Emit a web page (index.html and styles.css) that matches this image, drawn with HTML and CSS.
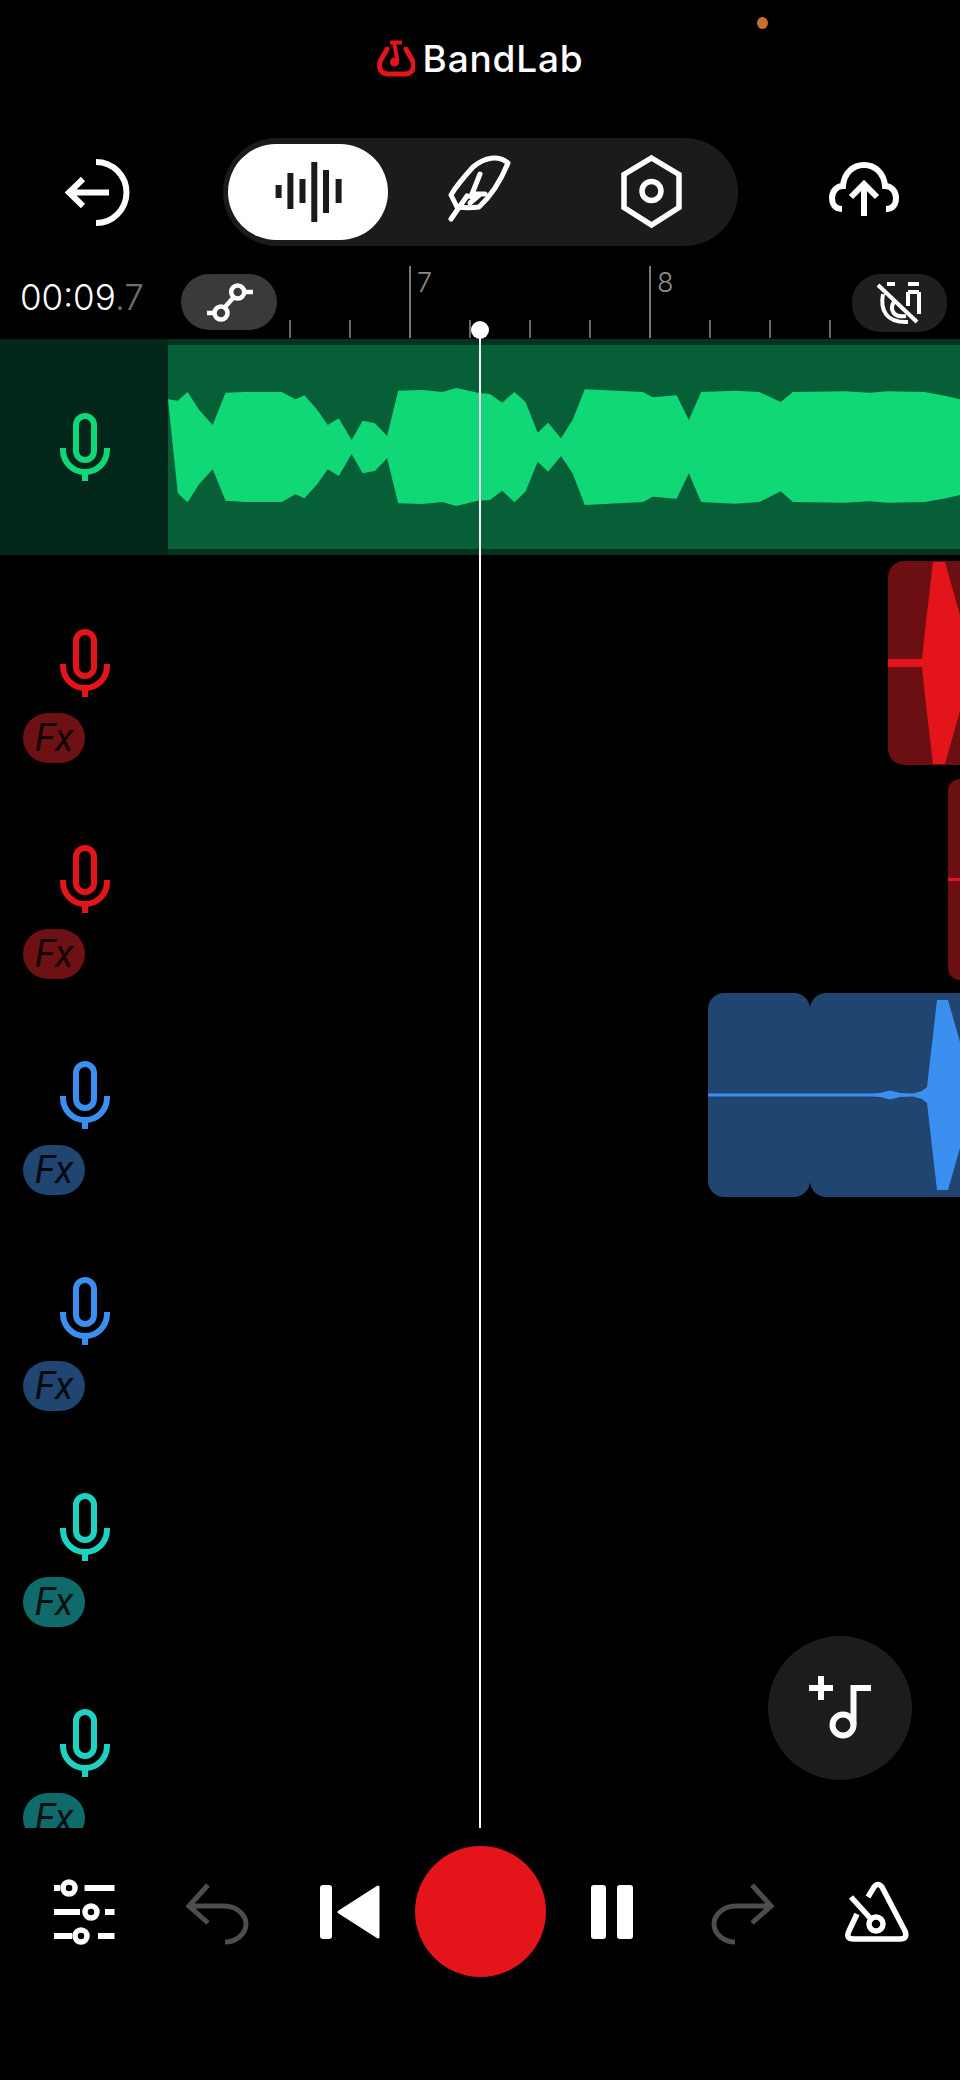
FILE: index.html
```html
<!DOCTYPE html>
<html lang="en">
<head>
    <meta charset="UTF-8">
    <meta name="viewport" content="width=device-width, initial-scale=1.0">
    <title>BandLab Studio</title>
    <link rel="stylesheet" href="styles.css">
</head>
<body>
    <svg class="sprite">
        <symbol id="mic" viewBox="0 0 50 68">
            <rect x="16" y="3" width="18" height="44" rx="9" fill="none" stroke="currentColor" stroke-width="6"/>
            <path d="M3 35V37A22 22 0 0 0 47 37V35M25 59V68" fill="none" stroke="currentColor" stroke-width="6"/>
        </symbol>
        <symbol id="undo" viewBox="0 0 72 72">
            <path d="M28 9L9 30L28 47M9 30H44C58 30 66 40 66 48C66 58 56 66 45 66" fill="none" stroke="currentColor" stroke-width="5"/>
        </symbol>
    </svg>

    <span class="status-dot"></span>

    <header class="brand">
        <svg class="brand-logo" viewBox="7 10 38 37">
            <path d="M17 19C14 26 9.5 29 9.5 35C9.5 41 13 44 18 44H35C40 44 43.5 41 43.5 35C43.5 29 39 26 36 19" fill="none" stroke="#e3151a" stroke-width="5" stroke-linecap="round"/>
            <path d="M20 12.5H32M24 12L27.5 31" fill="none" stroke="#e3151a" stroke-width="4"/>
            <circle cx="24.5" cy="32" r="4.5" fill="#e3151a"/>
        </svg>
        <span class="brand-name">BandLab</span>
    </header>

    <nav class="toolbar">
        <svg class="icon-back" width="70" height="70" viewBox="0 0 70 70">
            <path d="M34 5A30.5 30.5 0 0 1 34 66" fill="none" stroke="#fff" stroke-width="6"/>
            <path d="M47 35.5H8M21 22L7 35.5L21 49" fill="none" stroke="#fff" stroke-width="6"/>
        </svg>
        <div class="pill">
            <div class="seg seg-active">
                <svg width="72" height="64" viewBox="0 0 72 64" fill="#1a1b1d">
                    <rect x="3.6" y="25" width="6" height="13"/>
                    <rect x="15.4" y="13" width="6" height="36"/>
                    <rect x="27.5" y="19" width="6" height="24"/>
                    <rect x="39.3" y="2" width="6" height="60"/>
                    <rect x="51" y="10" width="6" height="43"/>
                    <rect x="63.6" y="19" width="6" height="24"/>
                </svg>
            </div>
            <div class="seg seg-mid">
                <svg width="72" height="76" viewBox="1 4 72 76" fill="none" stroke="#fff" stroke-width="5">
                    <path d="M65 13C55 5 42 7 30 17C20 28 12 38 8 45L14 57C22 58 30 58 36 57C48 46 58 30 65 13Z" stroke-linejoin="round"/>
                    <path d="M8 69L24 46M37 24L29 44H42M24 46L34 47L27 53" stroke-linecap="round"/>
                </svg>
            </div>
            <div class="seg">
                <svg width="66" height="76" viewBox="0 0 66 76" fill="none" stroke="#fff" stroke-width="5.5">
                    <path d="M32.5 4L60 20.5V53.5L32.5 71L5 53.5V20.5Z"/>
                    <circle cx="32.5" cy="37" r="9.5"/>
                </svg>
            </div>
        </div>
        <svg class="icon-cloud" width="76" height="60" viewBox="0 2 76 60" fill="none" stroke="#fff" stroke-width="6">
            <path d="M16 49C8 49 6 43 6 38C6 31 11 26 17 26C18 13 27 5 38 5C49 5 58 13 59 26C65 26 70 31 70 38C70 44 67 49 60 49"/>
            <path d="M38 56V24M25 37L38 24L51 37"/>
        </svg>
    </nav>

    <section class="timebar">
        <div class="timer">00:09<span class="timer-dim">.7</span></div>
        <div class="chip chip-auto">
            <svg width="96" height="56" viewBox="0 0 96 56" fill="none" stroke="#fff" stroke-width="4.5">
                <circle cx="56.7" cy="18" r="6.5"/>
                <circle cx="40" cy="39" r="6.5"/>
                <path d="M52 24L44 33M63 18H72M33 39H26"/>
            </svg>
        </div>
        <div class="ruler">
            <div class="bar"><span>7</span></div>
            <div class="bar"><span>8</span></div>
        </div>
        <div class="chip chip-snap">
            <svg width="95" height="58" viewBox="0 0 95 58" fill="none" stroke="#fff" stroke-width="4">
                <path d="M26 11L65 48"/>
                <path d="M31 20C28 36 34 49 56 48M43 26C36 36 42 44 54 42"/>
                <path d="M35 10H43M56 10H67M56 18H67M56 18V32M67 18V40"/>
            </svg>
        </div>
    </section>

    <main class="tracks">
        <div class="track track-active">
            <div class="track-head green">
                <svg class="mic"><use href="#mic"/></svg>
            </div>
            <div class="lane">
                <div class="clip clip-green">
                    <svg class="wave" viewBox="274 45 1294 612" preserveAspectRatio="none">
                        <polygon fill="#10d876" points="274,208 290,212 306,186 325,240 347,285 368,188 400,186 460,186 482,208 497,196 518,240 535,285 553,265 574,330 592,272 612,280 632,318 650,182 690,180 722,186 745,174 780,188 800,192 820,218 840,186 858,215 878,308 895,278 916,325 935,270 955,178 1050,186 1066,202 1105,196 1125,270 1145,186 1200,182 1240,186 1275,216 1295,186 1380,184 1420,188 1450,184 1510,186 1545,198 1568,208 1568,495 1545,505 1510,516 1450,518 1420,514 1380,518 1295,516 1275,484 1240,516 1200,521 1145,516 1125,430 1105,506 1066,500 1050,516 955,525 935,430 916,378 895,425 878,395 858,485 840,517 820,482 800,510 780,512 745,528 722,516 690,522 650,520 632,385 612,423 592,430 574,372 553,438 535,418 518,462 497,505 482,493 460,516 400,516 368,512 347,418 325,462 306,517 290,490"/>
                    </svg>
                </div>
            </div>
        </div>

        <div class="track">
            <div class="track-head red">
                <svg class="mic"><use href="#mic"/></svg>
                <span class="fx">Fx</span>
            </div>
            <div class="lane">
                <div class="clip clip-red clip-a">
                    <svg class="wave" viewBox="0 0 72 204">
                        <polygon fill="#e3151a" points="0,98 34,98 37,69 45,1 57,1 72,54 72,150 57,203 45,203 37,135 34,106 0,106"/>
                    </svg>
                </div>
            </div>
        </div>

        <div class="track">
            <div class="track-head red">
                <svg class="mic"><use href="#mic"/></svg>
                <span class="fx">Fx</span>
            </div>
            <div class="lane">
                <div class="clip clip-red clip-b">
                    <svg class="wave" viewBox="0 0 12 201">
                        <rect y="99" width="12" height="3" fill="#e3151a"/>
                    </svg>
                </div>
            </div>
        </div>

        <div class="track">
            <div class="track-head blue">
                <svg class="mic"><use href="#mic"/></svg>
                <span class="fx">Fx</span>
            </div>
            <div class="lane">
                <div class="clip clip-blue clip-c">
                    <svg class="wave" viewBox="0 0 102 204">
                        <rect y="100.5" width="102" height="3" fill="#3a8ff0"/>
                    </svg>
                </div>
                <div class="clip clip-blue clip-d">
                    <svg class="wave" viewBox="0 0 150 204">
                        <polygon fill="#3a8ff0" points="0,100.5 62,100.5 70,100 80,97.5 90,100 103,100.5 112,98 117,94 127,7 138,7 150,49 150,155 138,197 127,197 117,110 112,106 103,103.5 90,104 80,106.5 70,104 62,103.5 0,103.5"/>
                    </svg>
                </div>
            </div>
        </div>

        <div class="track">
            <div class="track-head blue">
                <svg class="mic"><use href="#mic"/></svg>
                <span class="fx">Fx</span>
            </div>
            <div class="lane"></div>
        </div>

        <div class="track">
            <div class="track-head teal">
                <svg class="mic"><use href="#mic"/></svg>
                <span class="fx">Fx</span>
            </div>
            <div class="lane"></div>
        </div>

        <div class="track">
            <div class="track-head teal">
                <svg class="mic"><use href="#mic"/></svg>
                <span class="fx">Fx</span>
            </div>
            <div class="lane"></div>
        </div>
    </main>

    <!-- overlays -->
    <div class="playhead"></div>
    <div class="add-track">
        <svg width="144" height="144" viewBox="0 0 144 144" fill="none" stroke="#fff" stroke-width="6">
            <path d="M41 52H65M53 40V64"/>
            <circle cx="75" cy="89" r="10.5"/>
            <path d="M85.5 89V52H103"/>
        </svg>
    </div>

    <footer class="transport">
        <svg width="72" height="72" viewBox="0 0 72 72" fill="none" stroke="#fff">
            <path d="M6 12H12M36.5 12H66.5M6 36H32M57 36H66.5M6 60H24M50 60H66.5" stroke-width="6"/>
            <circle cx="21" cy="12" r="6" stroke-width="5.5"/>
            <circle cx="43" cy="36" r="6" stroke-width="5.5"/>
            <circle cx="33" cy="60" r="6" stroke-width="5.5"/>
        </svg>
        <svg class="muted" width="72" height="72"><use href="#undo"/></svg>
        <svg width="72" height="72" viewBox="0 0 72 72" fill="#fff">
            <rect x="8" y="9" width="12" height="54" rx="3"/>
            <polygon points="27,36 66,11 66,61" stroke="#fff" stroke-width="3" stroke-linejoin="round"/>
        </svg>
        <button class="record" aria-label="Record"></button>
        <svg width="72" height="72" viewBox="0 0 72 72" fill="#fff">
            <rect x="15" y="9" width="15" height="54" rx="3"/>
            <rect x="41" y="9" width="16" height="54" rx="3"/>
        </svg>
        <svg class="muted flip" width="72" height="72"><use href="#undo"/></svg>
        <svg width="72" height="72" viewBox="0 0 72 72" fill="none" stroke="#fff" stroke-width="5.5">
            <path d="M28 21L34 11Q38 6 42 11L65 55Q68 63 60 63H14Q5 63 9 55L17 38"/>
            <path d="M11 21L31 43"/>
            <circle cx="36" cy="48" r="7"/>
        </svg>
    </footer>
</body>
</html>
```

FILE: styles.css
```css
* {
    box-sizing: border-box;
}
html, body {
    margin: 0;
    padding: 0;
}
body {
    position: relative;
    width: 960px;
    height: 2080px;
    overflow: hidden;
    background: #000;
    color: #fff;
    font-family: 'Inter', 'Liberation Sans', sans-serif;
}
svg {
    display: block;
    flex: none;
}
.sprite {
    display: none;
}
.status-dot {
    position: absolute;
    left: 757px;
    top: 17px;
    width: 11px;
    height: 12px;
    border-radius: 50%;
    background: #c8702f;
}

/* top */
.brand {
    height: 138px;
    padding-top: 40px;
    display: flex;
    justify-content: center;
    align-items: flex-start;
    gap: 8px;
}
.brand-logo {
    width: 38px;
    height: 37px;
}
.brand-name {
    font-size: 37px;
    font-weight: 500;
    line-height: 38px;
    letter-spacing: 0.8px;
}
.toolbar {
    height: 108px;
    padding-left: 62px;
    display: flex;
    align-items: center;
}
.pill {
    width: 515px;
    height: 108px;
    margin-left: 91px;
    padding: 6px 5px;
    display: flex;
    background: #1a1b1d;
    border-radius: 54px;
}
.seg {
    width: 160px;
    display: flex;
    justify-content: center;
    align-items: center;
}
.seg-mid {
    width: 184px;
}
.seg-active {
    background: #fff;
    border-radius: 48px;
}
.icon-cloud {
    margin-left: 88px;
}

/* time row */
.timebar {
    height: 93px;
    padding-left: 20px;
    display: flex;
    align-items: flex-end;
}
.timer {
    width: 161px;
    flex: none;
    margin-bottom: 22px;
    font-size: 35px;
    font-weight: 300;
    line-height: 40px;
}
.timer-dim {
    color: #6e6e6e;
}
.chip {
    flex: none;
    border-radius: 28px;
}
.chip-auto {
    width: 96px;
    height: 56px;
    margin-bottom: 9px;
    background: #3a3a3a;
}
.chip-snap {
    width: 95px;
    height: 58px;
    margin-right: 13px;
    margin-bottom: 7px;
    background: #1f1f21;
}
.ruler {
    flex: 1;
    min-width: 0;
    height: 72px;
    margin-bottom: 1px;
    padding-left: 132px;
    display: flex;
    background: linear-gradient(to right, #666 2px, transparent 2px) 12px bottom / 60px 18px repeat-x;
}
.bar {
    width: 240px;
    flex: none;
    padding-left: 6px;
    border-left: 2px solid #777;
    color: #8a8a8a;
    font-size: 27px;
    font-weight: 300;
    line-height: 34px;
}

/* tracks */
.tracks {
    height: 1489px;
    overflow: hidden;
}
.track {
    height: 216px;
    display: flex;
}
.track-active {
    background: #06331f;
}
.track-head {
    width: 168px;
    flex: none;
    padding: 74px 0 0 23px;
}
.track-active .track-head {
    background: #03261a;
}
.mic {
    width: 50px;
    height: 68px;
    margin-left: 37px;
}
.fx {
    display: block;
    width: 62px;
    height: 50px;
    margin-top: 16px;
    border-radius: 25px;
    font-family: 'Roboto', sans-serif;
    font-size: 38px;
    font-weight: 400;
    font-style: italic;
    line-height: 50px;
    text-align: center;
    color: rgba(0, 0, 0, 0.85);
}
.green .mic { color: #10d876; }
.red .mic { color: #e3151a; }
.blue .mic { color: #3a8ff0; }
.teal .mic { color: #1ed1c0; }
.red .fx { background: #6e1114; }
.blue .fx { background: #1f4570; }
.teal .fx { background: #0f6b6b; }
.lane {
    flex: 1;
    padding: 6px 0;
    display: flex;
    justify-content: flex-end;
}
.clip {
    height: 204px;
    overflow: hidden;
}
.clip-green {
    width: 100%;
    background: #075f38;
}
.clip-red {
    background: #6b0f12;
    border-radius: 16px 0 0 16px;
}
.clip-blue {
    background: #1f4570;
}
.clip-a {
    width: 72px;
}
.clip-b {
    width: 12px;
    height: 201px;
    margin-top: 2px;
}
.clip-c {
    width: 102px;
    border-radius: 16px;
}
.clip-d {
    width: 150px;
    border-radius: 16px 0 0 16px;
}
.wave {
    width: 100%;
    height: 100%;
}

/* overlays */
.playhead {
    position: absolute;
    left: 479px;
    top: 330px;
    width: 2px;
    height: 1498px;
    background: #fff;
}
.playhead::before {
    content: "";
    position: absolute;
    left: -8px;
    top: -9px;
    width: 18px;
    height: 18px;
    border-radius: 50%;
    background: #fff;
}
.add-track {
    position: absolute;
    left: 768px;
    top: 1636px;
    width: 144px;
    height: 144px;
    border-radius: 50%;
    background: #1b1c1e;
}

/* bottom */
.transport {
    padding-top: 18px;
    display: grid;
    grid-template-columns: repeat(7, 132px);
    justify-content: center;
    justify-items: center;
    align-items: center;
}
.muted {
    color: #4d4d4d;
}
.flip {
    transform: scaleX(-1);
}
.record {
    width: 131px;
    height: 131px;
    padding: 0;
    border: none;
    border-radius: 50%;
    background: #e3151a;
}
```
